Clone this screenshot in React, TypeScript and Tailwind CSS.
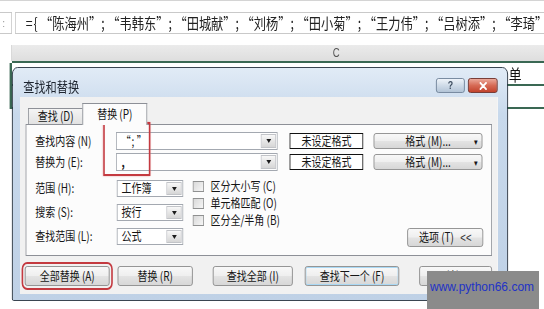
import type { ReactNode } from "react";

const cjk = "font-['Noto_Sans_CJK_SC','Liberation_Sans',sans-serif]";

const names = ["陈海州", "韦韩东", "田城献", "刘杨", "田小菊", "王力伟", "吕树添", "李琦", "张华", "赵明"];

function Tri() {
  return (
    <span className="w-0 h-0 border-x-[3.5px] border-x-transparent border-t-[4px] border-t-[#1c1c1c]" />
  );
}

function DropButton() {
  return (
    <span className="flex items-center justify-center w-[19px] m-px border border-[#c2c4c8] bg-[linear-gradient(#f8f8f8,#e6e6e6_50%,#d6d6d6)]">
      <Tri />
    </span>
  );
}

function Combo({ value, className }: { value: ReactNode; className: string }) {
  return (
    <div className={`flex bg-white border border-[#a3a8b0] ${className}`}>
      <span className="flex-1 flex items-center pl-[5px] leading-none">{value}</span>
      <DropButton />
    </div>
  );
}

function Btn({ children, className = "" }: { children: ReactNode; className?: string }) {
  return (
    <div
      className={`flex items-center justify-center rounded-[3px] border border-[#8a8a8a] bg-[linear-gradient(#f8f8f8,#efefef_48%,#e3e3e3_52%,#d7d7d7)] leading-none ${className}`}
    >
      {children}
    </div>
  );
}

function Check({ label }: { label: string }) {
  return (
    <div className="flex items-center h-[17px]">
      <span className="w-[14px] h-[11px] border border-[#8f9090] bg-[linear-gradient(135deg,#d9d9d9,#f6f6f6)]" />
      <span className="ml-[8px] leading-none">{label}</span>
    </div>
  );
}

function Dialog() {
  return (
    <div
      className={`absolute left-[15px] top-[67px] w-[620px] h-[234px] flex flex-col border border-[#24303d] rounded-t-[7px] rounded-b-[2px] bg-[linear-gradient(#e1ebf6,#c8d9ec_20%,#bfd1e6)] text-[12.5px] text-[#161616] ${cjk}`}
    >
      {/* Title bar */}
      <div className="flex items-center h-[29px] pl-[13px] pr-[12px] pt-[6px]">
        <span className="text-[14px] leading-none text-[#1e2530]">查找和替换</span>
        <div className="ml-auto flex gap-[4px]">
          <div className="flex items-center justify-center w-[36px] h-[15px] rounded-[3px] border border-[#6e8197] bg-[linear-gradient(#eef3f9,#cfdbe8_50%,#b3c4d7)] text-[11px] font-bold leading-none text-[#3d4d60] font-['Liberation_Sans',sans-serif]">
            ?
          </div>
          <div className="flex items-center justify-center w-[37px] h-[15px] rounded-[3px] border border-[#6d2a22] bg-[linear-gradient(#eba899,#d66a55_50%,#c2432d)]">
            <svg width="10" height="8" viewBox="0 0 10 8">
              <path d="M1.5 1 L8.5 7 M8.5 1 L1.5 7" stroke="#fff" strokeWidth="2.2" strokeLinecap="round" />
            </svg>
          </div>
        </div>
      </div>

      {/* Client area */}
      <div className="ml-[9px] mr-[12px] h-[197px] flex flex-col bg-[#f1f1f1]">
        {/* Tabs */}
        <div className="flex items-end h-[27px] pl-[10px]">
          <div className="flex items-center justify-center w-[69px] h-[16px] border border-b-0 border-[#8d9097] bg-[linear-gradient(#f4f4f4,#e2e2e2)] leading-none">
            查找 (D)
          </div>
          <div className="relative z-10 -ml-px -mb-px flex items-center justify-center w-[81px] h-[22px] border border-b-0 border-[#8d9097] bg-[#fcfcfc] leading-none">
            替换 (P)
          </div>
        </div>

        {/* Panel */}
        <div className="relative mx-[7px] h-[132px] border border-[#8d9097] bg-[#fcfcfc] pl-[11px] pr-[10px] pt-[7px]">
          <div className="flex items-center h-[18px]">
            <span className="w-[101px] leading-none">查找内容 (N)</span>
            <Combo
              value={
                <>
                  <span className="w-[10px]">“</span>
                  <span className="w-[10px] text-center">;</span>
                  <span className="w-[10px]">”</span>
                </>
              }
              className="w-[202px] h-[18px]"
            />
            <div className="ml-[15px] flex items-center justify-center w-[92px] h-[16px] border border-[#111] bg-white leading-none">
              未设定格式
            </div>
            <Btn className="ml-[13px] w-[136px] h-[16px]">
              <span className="flex-1 text-center pl-[10px]">格式 (M)...</span>
              <span className="w-[10px] text-[9px]">▾</span>
            </Btn>
          </div>
          <div className="flex items-center h-[18px] mt-[3px]">
            <span className="w-[101px] leading-none">替换为 (E):</span>
            <Combo value={<span className="pl-[1px] font-bold">,</span>} className="w-[202px] h-[18px]" />
            <div className="ml-[15px] flex items-center justify-center w-[92px] h-[16px] border border-[#111] bg-white leading-none">
              未设定格式
            </div>
            <Btn className="ml-[13px] w-[136px] h-[16px]">
              <span className="flex-1 text-center pl-[10px]">格式 (M)...</span>
              <span className="w-[10px] text-[9px]">▾</span>
            </Btn>
          </div>

          <div className="flex mt-[9px]">
            <div className="flex flex-col gap-[7px]">
              <div className="flex items-center h-[17px]">
                <span className="w-[102px] leading-none">范围 (H):</span>
                <Combo value="工作簿" className="w-[83px] h-[17px]" />
              </div>
              <div className="flex items-center h-[17px]">
                <span className="w-[102px] leading-none">搜索 (S):</span>
                <Combo value="按行" className="w-[83px] h-[17px]" />
              </div>
              <div className="flex items-center h-[17px]">
                <span className="w-[102px] leading-none">查找范围 (L):</span>
                <Combo value="公式" className="w-[83px] h-[17px]" />
              </div>
            </div>
            <div className="ml-[12px] -mt-[2px] flex flex-col">
              <Check label="区分大小写 (C)" />
              <Check label="单元格匹配 (O)" />
              <Check label="区分全/半角 (B)" />
            </div>
            <Btn className="ml-auto self-end -mb-[2px] w-[95px] h-[19px] gap-[8px]">
              <span>选项 (T)</span>
              <span className="font-['Liberation_Sans',sans-serif] text-[12px] text-[#333]">&lt;&lt;</span>
            </Btn>
          </div>

          {/* highlight */}
          <div className="absolute left-[96px] top-[-3px] w-[59px] h-[54px] border-2 border-[#c43a40] shadow-[0_0_2px_#e8a0a4]" />
        </div>

        {/* Bottom buttons */}
        <div className="flex mt-[10px] pl-[6px] h-[20px]">
          <Btn className="w-[106px] h-[20px] outline-2 outline-[#c43a40] outline-offset-[2px]">全部替换 (A)</Btn>
          <Btn className="ml-[10px] w-[94px] h-[20px]">替换 (R)</Btn>
          <Btn className="ml-[25px] w-[100px] h-[20px]">查找全部 (I)</Btn>
          <Btn className="ml-[15px] w-[118px] h-[20px] border-[#3c7fb1] shadow-[inset_0_0_0_1px_#a9d8f4]">查找下一个 (F)</Btn>
          <Btn className="ml-[25px] w-[91px] h-[20px]">关闭</Btn>
        </div>
      </div>
    </div>
  );
}

export default function App() {
  return (
    <div className="relative w-[544px] h-[309px] overflow-hidden bg-white">
      <div className="relative w-[680px] h-[309px] origin-top-left scale-x-[0.8]">
        <div className="h-[12px] border-t border-[#d4d4d4]" />

        {/* Formula bar */}
        <div className="flex h-[22px]">
          <div className="w-[15px] flex items-center pl-[3px] border border-l-0 border-[#c9c9c9] text-[11px] text-[#888] leading-none font-['Liberation_Sans',sans-serif]">
            :
          </div>
          <div
            className={`ml-[4px] flex-1 flex items-center pl-[11px] border border-r-0 border-[#c9c9c9] bg-white text-[15.3px] leading-none text-[#222] whitespace-nowrap overflow-hidden ${cjk}`}
          >
            <span className="shrink-0 w-[11px] text-center">=</span>
            <span className="shrink-0 w-[8px]">{"{"}</span>
            {names.map((n, i) => (
              <span key={n} className="flex shrink-0">
                <span className="w-[15.3px] text-right">“</span>
                {n}
                <span className="w-[15.3px]">”</span>
                {i < names.length - 1 && <span className="w-[7.5px]">;</span>}
              </span>
            ))}
          </div>
        </div>

        <div className="h-[11px]" />

        {/* Column header */}
        <div className="flex h-[16px]">
          <div className="w-[15px] border-r border-[#d0d0d0]" />
          <div className="flex-1 flex items-center pl-[401px] bg-[linear-gradient(#ebebeb,#dedede)] text-[12px] leading-none text-[#555] font-['Liberation_Sans',sans-serif]">
            C
          </div>
        </div>
        <div className="ml-[15px] h-[2px] bg-[#3a6853]" />

        {/* Rows */}
        <div className="ml-[12px] border-l-[3px] border-[#3a6853]">
          <div className={`flex items-center h-[23px] border-b-2 border-[#3a6853] pl-[621px] text-[16px] leading-none text-[#111] ${cjk}`}>
            单
          </div>
          <div className="h-[23px] border-b-2 border-[#3a6853]" />
        </div>

        <Dialog />
      </div>

      {/* watermark */}
      <div className="absolute left-[427px] top-[271px] w-[112px] h-[38px] bg-[#8b8b8b] pl-[3px] pt-[8px] text-[12px] leading-[16px] text-[#2233c6] font-['Liberation_Sans',sans-serif]">
        www.python66.com
      </div>
    </div>
  );
}
